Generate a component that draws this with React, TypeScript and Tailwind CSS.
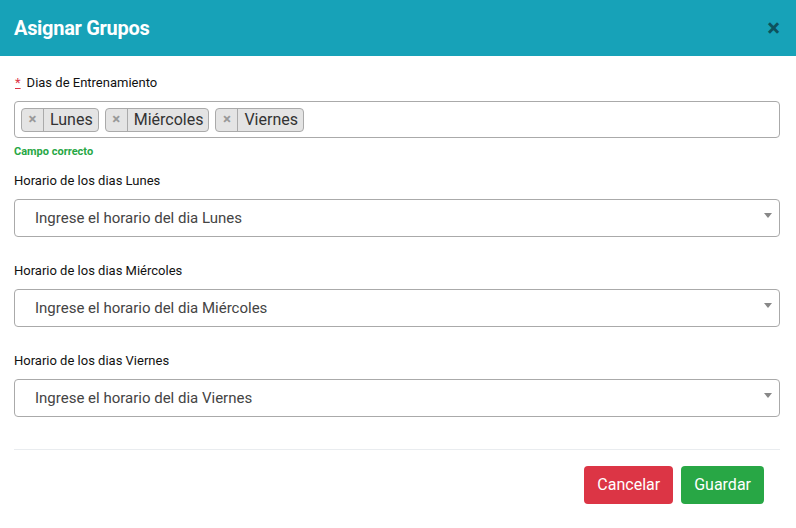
import React from 'react';

const font = { fontFamily: 'Roboto, "Liberation Sans", sans-serif' };

function Tag({ label }: { label: string }) {
  return (
    <span className="flex h-[24px] items-stretch rounded-[4px] border border-[#aaa] bg-[#e4e4e4] text-[16px] text-[#333]">
      <span className="flex w-[22px] items-center justify-center border-r border-[#aaa] text-[15px] font-bold text-[#999]">×</span>
      <span className="flex items-center pl-[6px] pr-[5px] leading-none">{label}</span>
    </span>
  );
}

function HorarioSelect({ dia }: { dia: string }) {
  return (
    <div className="flex flex-col">
      <label className="mb-[9px] text-[13px] font-normal leading-[18px] text-[#111]">
        Horario de los dias {dia}
      </label>
      <div className="flex h-[38px] items-center justify-between rounded-[4px] border border-[#aaa] pl-[20px] pr-[7px]">
        <span className="text-[15px] text-[#444]">Ingrese el horario del dia {dia}</span>
        <span className="mb-[5px] h-0 w-0 border-x-[4px] border-t-[5px] border-x-transparent border-t-[#888]" />
      </div>
    </div>
  );
}

export default function App() {
  return (
    <div className="h-[528px] w-[796px] bg-white" style={font}>
      {/* Header */}
      <div className="flex h-[56px] items-center justify-between bg-[#17a2b8] pl-[14px] pr-[16px]">
        <h5 className="text-[20px] font-bold tracking-[-0.3px] text-white">Asignar Grupos</h5>
        <button className="text-[24px] font-bold leading-none text-[#0b3c44]/80">×</button>
      </div>

      {/* Body */}
      <div className="pl-[14px] pr-[16px] pt-[18px]">
        <div className="flex flex-col">
          <label className="mb-[9px] flex items-center text-[13px] font-normal leading-[18px] text-[#111]">
            <span className="mr-[6px] ml-[1px] text-[#dc3545] underline">*</span>
            Dias de Entrenamiento
          </label>
          <div className="flex h-[37px] items-center gap-[6px] rounded-[4px] border border-[#aaa] px-[6px]">
            <Tag label="Lunes" />
            <Tag label="Miércoles" />
            <Tag label="Viernes" />
          </div>
          <span className="mt-[7px] text-[11px] font-bold leading-[14px] text-[#28a745]">Campo correcto</span>
        </div>

        <div className="mt-[13px] flex flex-col gap-[25px]">
          <HorarioSelect dia="Lunes" />
          <HorarioSelect dia="Miércoles" />
          <HorarioSelect dia="Viernes" />
        </div>

        <div className="mt-[32px] border-t border-[#e9ecef]" />

        <div className="flex justify-end gap-[8px] pt-[16px] pr-[16px]">
          <button className="h-[38px] rounded-[4px] bg-[#dc3545] px-[13px] text-[16px] text-white">Cancelar</button>
          <button className="h-[38px] rounded-[4px] bg-[#28a745] px-[13px] text-[16px] text-white">Guardar</button>
        </div>
      </div>
    </div>
  );
}
